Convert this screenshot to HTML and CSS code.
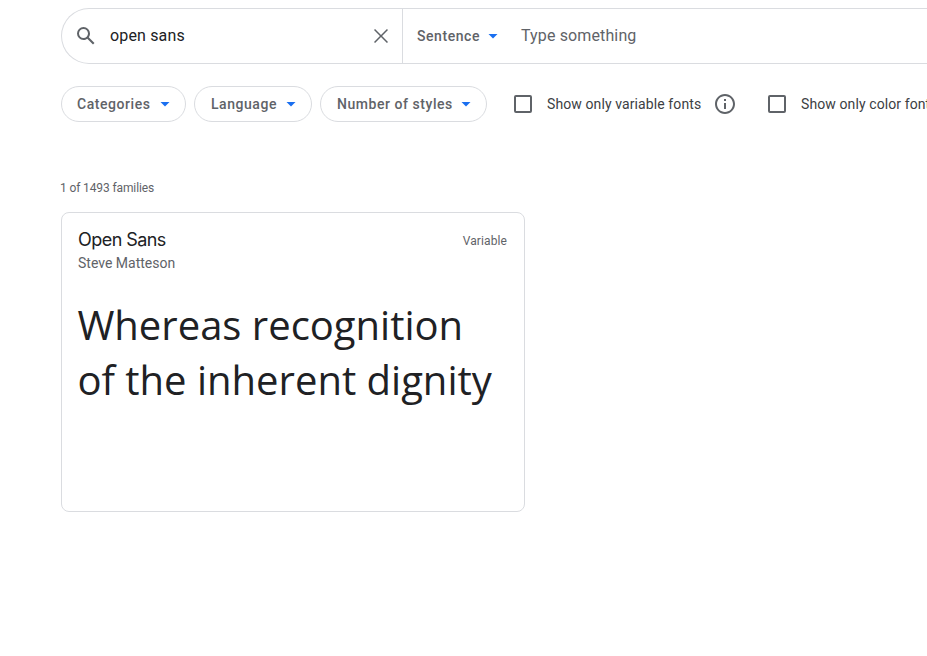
FILE: index.html
```html
<!DOCTYPE html>
<html lang="en">
<head>
<meta charset="utf-8">
<title>Browse Fonts</title>
<link rel="stylesheet" href="styles.css">
</head>
<body>
<main class="page">
  <div class="searchbar">
    <div class="search">
      <svg class="icon" viewBox="0 0 24 24"><path d="M20.49 19l-5.73-5.73C15.53 12.2 16 10.91 16 9.5A6.5 6.5 0 1 0 9.5 16c1.41 0 2.7-.47 3.77-1.24L19 20.49 20.49 19zM5 9.5C5 7.01 7.01 5 9.5 5S14 7.01 14 9.5 11.99 14 9.5 14 5 11.99 5 9.5z"/></svg>
      <span class="query">open sans</span>
      <svg class="icon" viewBox="0 0 24 24"><path d="M19 6.05L17.95 5 12 10.95 6.05 5 5 6.05 10.95 12 5 17.95 6.05 19 12 13.05 17.95 19 19 17.95 13.05 12z"/></svg>
    </div>
    <div class="preview">
      <span class="label sentence">Sentence</span><i class="arrow"></i>
      <span class="placeholder">Type something</span>
    </div>
  </div>
  <div class="filters">
    <button class="chip categories"><span class="label">Categories</span><i class="arrow"></i></button>
    <button class="chip language"><span class="label">Language</span><i class="arrow"></i></button>
    <button class="chip styles"><span class="label">Number of styles</span><i class="arrow"></i></button>
    <span class="box"></span>
    <span class="option variable">Show only variable fonts</span>
    <svg class="info" viewBox="0 0 24 24"><path d="M11 7h2v2h-2zm0 4h2v6h-2zm1-9C6.48 2 2 6.48 2 12s4.48 10 10 10 10-4.48 10-10S17.52 2 12 2zm0 18c-4.41 0-8-3.59-8-8s3.59-8 8-8 8 3.59 8 8-3.59 8-8 8z"/></svg>
    <span class="box second"></span>
    <span class="option color">Show only color fonts</span>
  </div>
  <p class="count">1 of 1493 families</p>
  <article class="card">
    <header class="head">
      <div>
        <h2 class="name">Open Sans</h2>
        <p class="author">Steve Matteson</p>
      </div>
      <span class="tag">Variable</span>
    </header>
    <p class="specimen">Whereas recognition<br>of the inherent dignity</p>
  </article>
</main>
</body>
</html>
```
FILE: styles.css
```css
* { box-sizing: border-box; }
body {
  margin: 0;
  background: #fff;
  color: #5f6368;
  font-family: Roboto, "Liberation Sans", sans-serif;
  overflow: hidden;
}
h2, p { margin: 0; font-weight: 400; }
.page { padding: 8px 0 0 61px; overflow: hidden; }
svg { fill: #5f6368; flex: none; display: block; }
.searchbar {
  display: flex;
  height: 56px;
  border: 1px solid #dadce0;
  border-right: 0;
  border-radius: 28px 0 0 28px;
}
.search {
  display: flex;
  align-items: center;
  width: 341px;
  padding: 0 9px 0 12px;
  border-right: 1px solid #dadce0;
}
.icon { width: 24px; height: 24px; }
.query {
  flex: 1;
  margin-left: 12px;
  padding-bottom: 2px;
  font-size: 16px;
  letter-spacing: .15px;
  color: #202124;
}
.preview { display: flex; align-items: center; padding-left: 14px; }
.label {
  font-size: 14px;
  font-weight: 500;
  line-height: 20px;
  letter-spacing: .55px;
  white-space: nowrap;
}
.arrow {
  flex: none;
  width: 10px;
  height: 5px;
  background: #1a6ff0;
  clip-path: polygon(0 0, 100% 0, 50% 100%);
}
.sentence { width: 71px; }
.placeholder { margin-left: 23px; padding-bottom: 2px; font-size: 16px; letter-spacing: .13px; }
.filters {
  display: flex;
  align-items: center;
  height: 36px;
  margin-top: 22px;
}
.chip {
  display: flex;
  flex: none;
  align-items: center;
  justify-content: space-between;
  height: 36px;
  margin-right: 8px;
  padding: 0 15px;
  border: 1px solid #dadce0;
  border-radius: 18px;
  background: #fff;
  color: inherit;
  font-family: inherit;
}
.categories { width: 125px; }
.language { width: 118px; padding-left: 16px; }
.styles { width: 167px; padding-left: 16px; }
.box {
  flex: none;
  width: 18px;
  height: 18px;
  margin: 0 15px 0 19px;
  border: 2px solid #5f6368;
  border-radius: 2px;
}
.second { margin-left: 31px; }
.option {
  flex: none;
  font-size: 14px;
  line-height: 20px;
  letter-spacing: .1px;
  color: #3c4043;
  white-space: nowrap;
}
.variable { width: 166px; }
.info { width: 24px; height: 24px; }
.count { margin: 58px 0 0 -1px; font-size: 12px; line-height: 16px; letter-spacing: -.12px; }
.card {
  width: 464px;
  height: 300px;
  margin-top: 16px;
  padding: 15px 16px;
  border: 1px solid #dadce0;
  border-radius: 8px;
}
.head { display: flex; justify-content: space-between; }
.name {
  font-family: Inter, sans-serif;
  font-size: 18px;
  line-height: 24px;
  letter-spacing: -.55px;
  color: #202124;
}
.author { font-size: 14px; line-height: 20px; margin-top: 1px; }
.tag { font-size: 12px; line-height: 16px; margin: 5px 1px 0 0; letter-spacing: .1px; }
.specimen {
  margin: 24px 0 0 -.6px;
  font-family: "Open Sans", sans-serif;
  font-size: 40px;
  line-height: 55px;
  color: #202124;
  white-space: nowrap;
}
```
